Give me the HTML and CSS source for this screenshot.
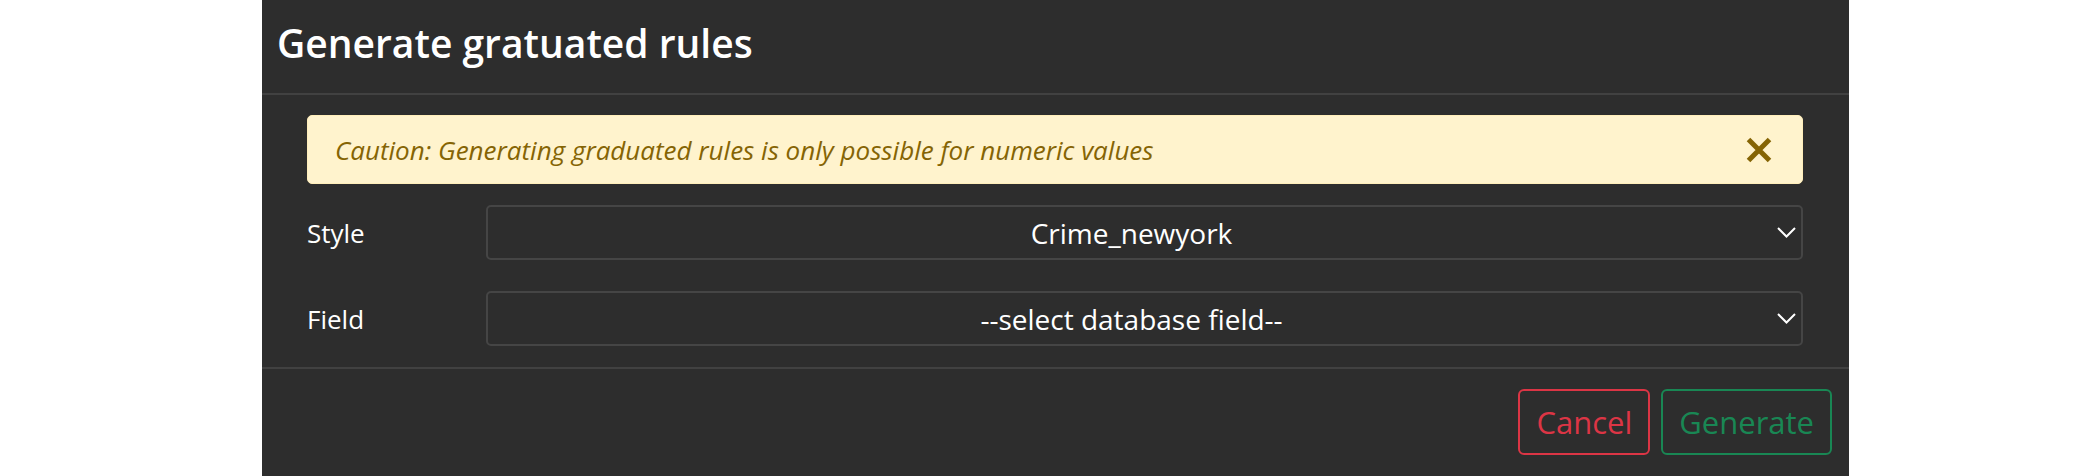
FILE: index.html
```html
<!DOCTYPE html>
<html lang="en">
<head>
<meta charset="utf-8">
<title>Generate gratuated rules</title>
<link rel="stylesheet" href="styles.css">
</head>
<body>
<div class="modal">
  <div class="modal-header">
    <h3 class="modal-title">Generate gratuated rules</h3>
  </div>
  <div class="modal-body">
    <div class="alert">
      <span class="alert-text">Caution: Generating graduated rules is only possible for numeric values</span>
      <button class="alert-close" type="button" aria-label="Close">
        <svg width="26" height="26" viewBox="0 0 26 26"><path d="M2.5 2.5 L23.5 23.5 M23.5 2.5 L2.5 23.5" stroke="#856404" stroke-width="5" fill="none"/></svg>
      </button>
    </div>
    <div class="form-row">
      <label class="form-label" for="style">Style</label>
      <div class="select-wrap">
        <select id="style" class="form-select">
          <option>Crime_newyork</option>
        </select>
        <svg class="chevron" width="19" height="11" viewBox="0 0 19 11"><path d="M1 1 L9.5 9.5 L18 1" stroke="#ffffff" stroke-width="2" fill="none"/></svg>
      </div>
    </div>
    <div class="form-row">
      <label class="form-label" for="field">Field</label>
      <div class="select-wrap">
        <select id="field" class="form-select">
          <option>--select database field--</option>
        </select>
        <svg class="chevron" width="19" height="11" viewBox="0 0 19 11"><path d="M1 1 L9.5 9.5 L18 1" stroke="#ffffff" stroke-width="2" fill="none"/></svg>
      </div>
    </div>
  </div>
  <div class="modal-footer">
    <button class="btn btn-cancel" type="button">Cancel</button>
    <button class="btn btn-generate" type="button">Generate</button>
  </div>
</div>
</body>
</html>
```
FILE: styles.css
```css
html, body {
  margin: 0;
  padding: 0;
  background: #ffffff;
  font-family: "Open Sans", "Noto Sans", sans-serif;
}

.modal {
  margin-left: 262px;
  width: 1587px;
  min-height: 476px;
  background: #2d2d2d;
  color: #ffffff;
}

.modal-header {
  height: 93px;
  box-sizing: content-box;
  border-bottom: 2px solid #414141;
  padding: 0 15px;
}

.modal-title {
  margin: 0;
  padding-top: 19px;
  font-size: 39px;
  line-height: 47px;
  font-weight: 600;
}

.modal-body {
  padding: 20px 46px 21px 45px;
  display: flex;
  flex-direction: column;
}

.alert {
  height: 69px;
  box-sizing: border-box;
  background: #fff3cd;
  border: 1px solid #ffeeba;
  border-radius: 5px;
  color: #856404;
  display: flex;
  align-items: center;
  justify-content: space-between;
  padding: 0 30px 0 27px;
  margin-bottom: 21px;
}

.alert-text {
  font-style: italic;
  font-size: 26px;
}

.alert-close {
  border: 0;
  background: none;
  padding: 0;
  width: 26px;
  height: 26px;
  display: flex;
}

.form-row {
  display: flex;
  align-items: center;
  margin-bottom: 31px;
}

.form-row:last-child {
  margin-bottom: 0;
}

.form-label {
  width: 179px;
  flex: none;
  font-size: 26px;
  color: #ffffff;
}

.select-wrap {
  position: relative;
  flex: 1;
  display: flex;
}

.form-select {
  -webkit-appearance: none;
  appearance: none;
  width: 100%;
  height: 55px;
  box-sizing: border-box;
  background: #2d2d2d;
  border: 2px solid #454545;
  border-radius: 5px;
  color: #ffffff;
  font-family: "Open Sans", "Noto Sans", sans-serif;
  font-size: 28px;
  text-align: center;
  text-align-last: center;
  padding: 0 40px 0 14px;
  outline: none;
}

.chevron {
  position: absolute;
  right: 7px;
  top: 22px;
  pointer-events: none;
}

.modal-footer {
  border-top: 2px solid #414141;
  padding: 20px 17px 0 0;
  display: flex;
  justify-content: flex-end;
  gap: 11px;
}

.btn {
  font-family: "Open Sans", "Noto Sans", sans-serif;
  font-size: 31px;
  line-height: 46px;
  padding: 8px 16px;
  border: 2px solid;
  border-radius: 6px;
  background: transparent;
}

.btn-cancel {
  color: #dc3545;
  border-color: #dc3545;
}

.btn-generate {
  color: #198754;
  border-color: #198754;
}
```
